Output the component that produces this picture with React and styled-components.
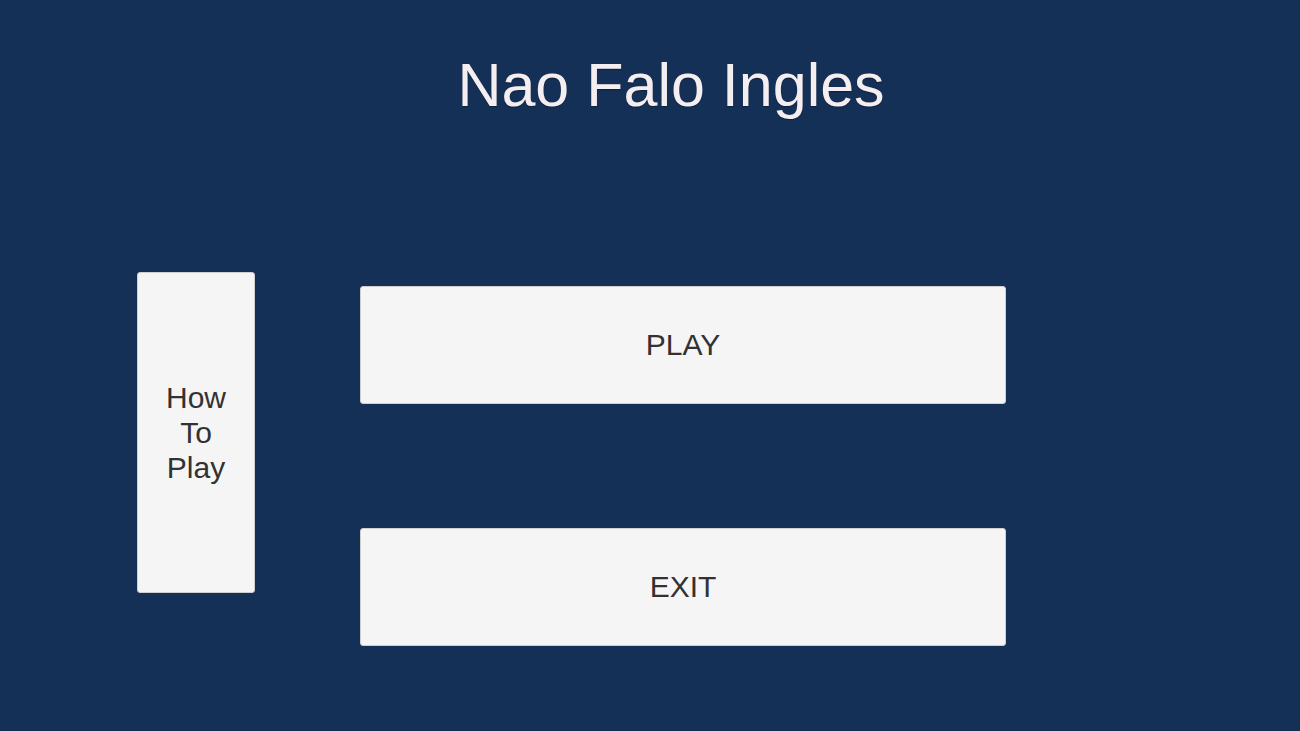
import styled, { createGlobalStyle } from "styled-components";

const GlobalStyle = createGlobalStyle`
    html, body {
        margin: 0;
        padding: 0;
        background: #143057;
    }
    body {
        font-family: "Liberation Sans", Arial, sans-serif;
    }
`;

function App() {
    return (
        <Screen>
            <GlobalStyle />
            <Title>Nao Falo Ingles</Title>

            <Menu>
                <SideButton>How<br />To<br />Play</SideButton>

                <MainColumn>
                    <WideButton>PLAY</WideButton>
                    <WideButton>EXIT</WideButton>
                </MainColumn>
            </Menu>
        </Screen>
    );
}

export default App;

const Screen = styled.div`
    width: 1300px;
    height: 731px;
    background: #143057;
    display: flex;
    flex-direction: column;
    overflow: hidden;
`;

const Title = styled.h1`
    margin: 0;
    padding: 50px 0 0 42px;
    height: 70px;
    text-align: center;
    font-weight: 400;
    font-size: 61px;
    line-height: 70px;
    color: #f5eef0;
    text-shadow: 0 1px 1px rgba(0, 0, 0, 0.35);
`;

const Menu = styled.div`
    display: flex;
    align-items: flex-start;
    gap: 105px;
    padding: 152px 0 0 137px;
`;

const ButtonBase = styled.button`
    display: flex;
    align-items: center;
    justify-content: center;
    background: #f5f5f5;
    border: 1px solid #cfcfcf;
    border-radius: 3px;
    box-sizing: border-box;
    color: #323232;
    font-family: "Liberation Sans", Arial, sans-serif;
    font-size: 30px;
    padding: 0;
    cursor: pointer;
`;

const SideButton = styled(ButtonBase)`
    width: 118px;
    height: 321px;
    line-height: 35px;
    text-align: center;
`;

const MainColumn = styled.div`
    display: flex;
    flex-direction: column;
    gap: 124px;
    margin-top: 14px;
`;

const WideButton = styled(ButtonBase)`
    width: 646px;
    height: 118px;
`;
